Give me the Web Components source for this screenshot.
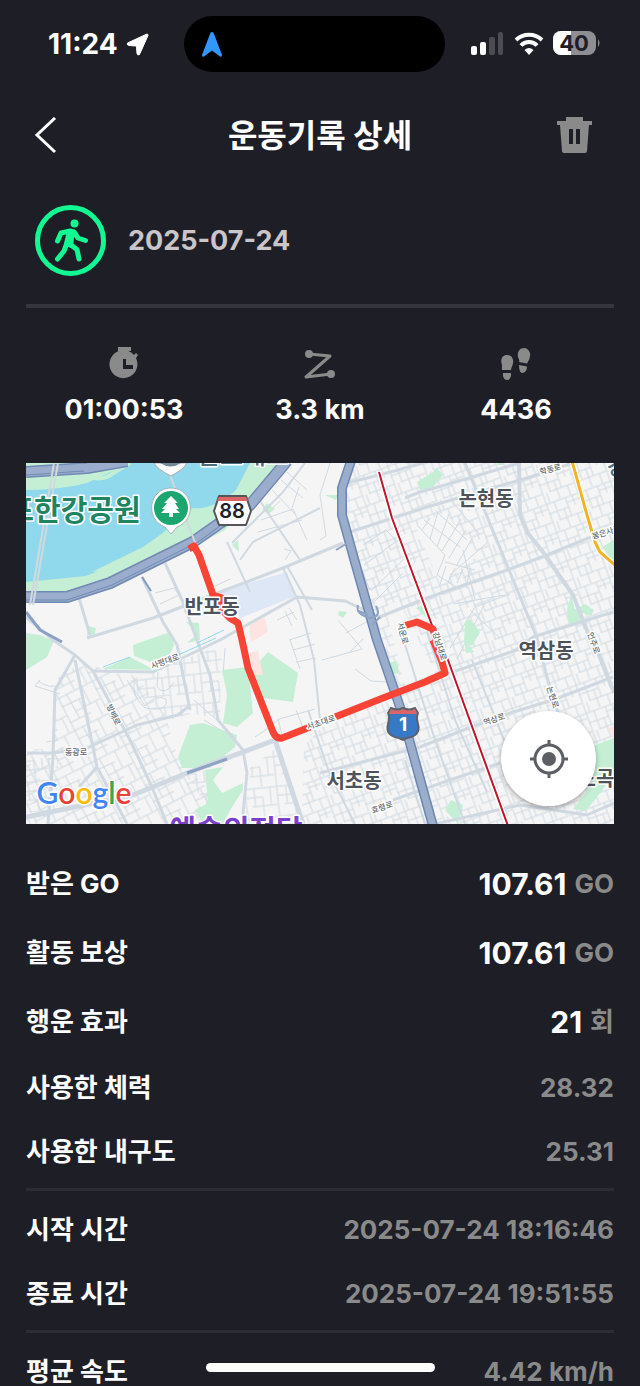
<!DOCTYPE html>
<html lang="ko">
<head>
<meta charset="utf-8">
<meta name="viewport" content="width=device-width, initial-scale=1">
<title>운동기록 상세</title>
<style>
    body {
        margin: 0;
        background: #1e1e26;
        color: #fff;
        font-family: Inter, "Noto Sans CJK KR", sans-serif;
        font-weight: 700;
    }
</style>
</head>
<body>
<workout-page></workout-page>

<script>
const define = (name, html, setup) => {
    const template = document.createElement('template');
    template.innerHTML = html;

    window.customElements.define(name, class extends HTMLElement {
        constructor() {
            super();
            this.attachShadow({ mode: 'open' });
            this.shadowRoot.appendChild(template.content.cloneNode(true));
            if (setup) setup(this.shadowRoot, this);
        }
    });
};

define('status-bar', `
    <style>
        :host {
            display: grid;
            grid-template-columns: 1fr 261px 1fr;
            align-items: center;
            padding: 16px 39px 0 28px;
        }
        .side {
            display: flex;
            align-items: center;
            gap: 8px;
            font-size: 28px;
            line-height: 32px;
        }
        .left { padding-left: 20px; }
        .right { gap: 9px; justify-content: flex-end; }
        .island {
            display: flex;
            align-items: center;
            height: 56px;
            border-radius: 28px;
            background: #000;
            padding-left: 18px;
            box-sizing: border-box;
        }
        svg { display: block; }
    </style>
    <div class="side left">
        <span>11:24</span>
        <svg width="23" height="23" viewBox="0 0 23 23"><path d="M21 1 1.500 10Q.5 12 3 12.500L10 13Q10.500 13 10.500 14L11 20.500Q11.500 23 13.500 21.500L22 2.500Q22 1 21 1Z" fill="#fff" stroke="#fff"/></svg>
    </div>
    <div class="island">
        <svg width="20" height="25" viewBox="0 0 20 25"><path d="M10 0Q11.500 0 12 2L20 23Q20 25.500 18 24.500L10 18.500 2 24.500Q0 25.500 0 23L8 2Q8.500 0 10 0Z" fill="#3296ff"/></svg>
    </div>
    <div class="side right">
        <svg width="34" height="26" viewBox="0 0 34 26">
            <rect x="0" y="15" width="6" height="9" rx="2" fill="#fff"/>
            <rect x="9" y="11" width="6" height="13" rx="2" fill="#fff"/>
            <rect x="18" y="6" width="6" height="18" rx="2" fill="#4c4c52"/>
            <rect x="27" y="1" width="5" height="23" rx="2" fill="#4c4c52"/>
        </svg>
        <svg width="30" height="25" viewBox="0 0 30 25" fill="none" stroke="#fff" stroke-width="4">
            <path d="M2 8A19 19 0 0 1 28 8"/><path d="M7 13.500A11 11 0 0 1 23 13.500"/>
            <path d="M15 23 10.500 18Q15 14 19.500 18Z" fill="#fff" stroke="none"/>
        </svg>
        <svg width="48" height="27" viewBox="0 0 48 27">
            <clipPath id="cell"><rect width="43" height="24" y="0" rx="8"/></clipPath>
            <g clip-path="url(#cell)"><rect width="43" height="27" fill="#8e8e93"/><rect width="18" height="27" fill="#fff"/></g>
            <path d="M45 8Q48 12 45 16Z" fill="#8e8e93"/>
            <text x="21" y="20" font-size="22" text-anchor="middle" fill="#1e1e26">40</text>
        </svg>
    </div>
`);

define('title-bar', `
    <style>
        :host {
            display: grid;
            grid-template-columns: 1fr auto 1fr;
            align-items: center;
            padding: 41px 48px 0 34px;
        }
        h1 { margin: 0 0 0 14px; font-size: 32px; line-height: 46px; }
        button { display: flex; border: 0; padding: 0; background: none; cursor: pointer; }
        .back { justify-self: start; }
        .remove { justify-self: end; }
    </style>
    <button class="back" aria-label="뒤로">
        <svg width="25" height="38" viewBox="0 0 25 38" fill="none" stroke="#fff" stroke-width="3"><path d="M21 1 3 18 21 35"/></svg>
    </button>
    <h1><slot></slot></h1>
    <button class="remove" aria-label="삭제">
        <svg width="35" height="38" viewBox="0 0 35 38"><path fill="#8a8a8a" fill-rule="evenodd" d="M9 0H26V4H35V8H32L30 34Q30 36 28 36H8Q5 36 5 34L3 8H0V4H9ZM12 12V27H16V12ZM19 12V27H23V12Z"/></svg>
    </button>
`);

define('workout-date', `
    <style>
        :host {
            display: flex;
            align-items: center;
            gap: 22px;
            margin: 46px 26px 0;
            padding: 0 9px 28px;
            border-bottom: 4px solid #35353e;
            color: #cac5c8;
            font-size: 27px;
            line-height: 34px;
        }
        svg { display: block; }
    </style>
    <svg width="71" height="71" viewBox="0 0 71 71" fill="none" stroke="#12f993" stroke-linecap="round" stroke-linejoin="round">
        <circle cx="35.500" cy="35.500" r="33" stroke-width="5"/>
        <circle cx="39.500" cy="18.500" r="4" fill="#12f993" stroke="none"/>
        <path stroke-width="5" d="M22.500 36 26 28 35 26 39 27 43 33 50.500 35.500M36 40 42 44.500 44 54M22.500 54 29 46 32 38"/>
        <path stroke-width="4" fill="#12f993" d="M34 26 38 27 37 33 36 41 31 39Z"/>
    </svg>
    <time><slot></slot></time>
`);

const statIcons = {
    time: '<path fill="#8a8a8a" d="M12 0H25V4H12Z"/><path fill="#8a8a8a" fill-rule="evenodd" d="M28 8 30 6 32 8 30 11A14 14 0 1 1 28 8ZM17 12V22H27V18H20V12Z"/>',
    distance: '<path d="M7 7 28 9 4 30 29 27" fill="none" stroke="#8a8a8a" stroke-width="3" stroke-linejoin="round"/><circle cx="7" cy="7" r="4" fill="#8a8a8a"/><circle cx="29" cy="27" r="4" fill="#8a8a8a"/>',
    steps: '<g fill="#8a8a8a"><path d="M9 8C4 8 2 13 4 18L4 23H13C13 20 16 17 15 13Q14 8 9 8ZM5 26H13V29Q12 33 9 33Q6 33 5 29ZM26 1C21 1 19 6 20 10Q22 14 21 15L29 16.500Q33 11 32 6Q30 1 26 1ZM21 18 29 19.500Q29 26 24 26Q21 25 21 18Z"/></g>'
};

define('stat-item', `
    <style>
        :host {
            flex: 1;
            display: flex;
            flex-direction: column;
            align-items: center;
            gap: 10px;
            font-size: 27px;
            line-height: 34px;
        }
    </style>
    <svg width="36" height="36" viewBox="0 0 36 36"></svg>
    <span><slot></slot></span>
`, (root, host) => {
    root.querySelector('svg').innerHTML = statIcons[host.getAttribute('icon')];
});

define('route-map', `
    <style>
        :host { display: block; position: relative; margin: 0 26px; }
        svg { display: block; width: 100%; }
        button {
            position: absolute;
            right: 18px;
            bottom: 18px;
            display: flex;
            align-items: center;
            justify-content: center;
            width: 95px;
            height: 95px;
            border: 0;
            border-radius: 50%;
            background: #fff;
            box-shadow: 0 2px 5px #0005;
            cursor: pointer;
        }
        button svg { width: 38px; height: 38px; }
        text { paint-order: stroke; stroke: #fff; stroke-width: 3px; stroke-linejoin: round; text-anchor: middle; }
        .minor path { fill: none; stroke: #d0dae2; stroke-width: 1; }
        .roads { fill: none; stroke: #d0d9e1; stroke-width: 3; stroke-linejoin: round; }
        .park { fill: #c4efd4; }
        .district { font-size: 20px; fill: #4c535b; font-weight: 600; stroke-width: 4px; }
        .street { font-size: 8px; fill: #666b70; font-weight: 500; }
        .route { fill: none; stroke: #f84335; stroke-width: 7; stroke-linejoin: round; }
    </style>
    <svg viewBox="26 463 588 361" role="img" aria-label="운동 경로 지도">
        <defs>
            <pattern id="fine" width="34" height="30" patternUnits="userSpaceOnUse" patternTransform="rotate(-20)">
                <path d="M0 1H34M0 11H21M8 20H34M1 0V30M9 1V20M16 11V30M21 1V20M28 1V11M27 20V30M5 20V30M21 6H34" fill="none" stroke="#cfd9e1"/>
            </pattern>
            <pattern id="west" width="38" height="36" patternUnits="userSpaceOnUse" patternTransform="rotate(-27)">
                <path d="M0 1H38M0 10 22 11M10 20H38M0 28H24M1 0V36M10 1 11 28M19 10V36M27 1V20M33 20V36" fill="none" stroke="#cfd9e1"/>
            </pattern>
            <pattern id="flat" width="32" height="30" patternUnits="userSpaceOnUse" patternTransform="rotate(-6)">
                <path d="M0 1H32M0 10H18M7 19H32M1 0V30M10 1V19M18 10V30M26 1V19" fill="none" stroke="#cfd9e1"/>
            </pattern>
        </defs>
        <path fill="#f5f5f5" d="M26 463H614V824H26Z"/>

        <path fill="url(#fine)" d="M352 463H614V824H435L415 748 386 650 350 545 345 500ZM304 745 330 720 395 700 430 824H302Z"/>
        <path fill="url(#west)" d="M55 680 80 663 136 676 165 715 180 765 222 800 205 824H26V750L52 748Z"/>
        <path fill="url(#flat)" d="M130 680 222 645 220 718 190 714 170 720 145 704ZM250 768 280 745 302 824H242ZM26 758H58V812H26ZM205 770 186 775 207 806 218 780Z"/>
        <path fill="#f5f5f5" d="M385 607 400 603 435 673 405 685ZM415 526 445 512 479 555 440 584Z"/>
        <g class="minor">
            <path d="M417 525 445 555 437 575 458 588M424 520 460 547M435 510 467 540M451 500 480 535M445 562 475 570M450 575 488 542M463 550 475 600M453 604 505 595M450 648 475 607 510 594M457 659 485 603M470 610 500 638M363 545 386 530 410 555M364 565 398 540M371 591 408 555M373 603 403 573M430 518 422 530M438 512 430 539M449 514 437 547M461 519 442 551M466 530 449 558M472 539 456 566M446 566 440 584M455 568 448 582M463 569 457 583M470 569 466 588"/>
            <path d="M40 680 35 686 60 694M38 681Q50 690 61 684M46 742 58 740M127 680 138 695 145 706Q156 694 166 699 169 712 145 708 130 695 135 678M158 672 157 687Q165 697 174 682M194 700 218 721M204 720 232 737M255 737 267 729 279 719 315 709M278 719 282 735M296 710 304 730M225 648 223 675"/>
            <path d="M330 463 320 495 326 536 320 540M350 543 370 590M338 620 362 649 322 660M346 633 374 618M350 652 363 639M355 669 371 681 388 682"/>
            <path d="M287 472 307 490M281 480 303 498M272 490 296 515M268 512 280 501M261 520 293 509M258 532 302 520M293 509 307 540M299 487 292 508M155 593 174 588M160 604 179 595M166 614 186 606M174 588 186 605M285 611 292 626M289 608 297 620M277 620 294 612M213 587 230 579M285 560 291 551 284 549M289 640 311 633M293 650 315 644M296 662 316 658M300 669 290 640"/>
        </g>

        <g class="park">
            <path d="M222 670 248 667 253 713 237 727 223 723 227 695ZM190 725 203 723 237 735 235 747 210 768 182 768 178 757ZM250 672 268 652 298 673 293 702 263 698ZM205 770 223 767 213 780 222 793 243 783 243 790 232 807 223 824H203L195 810 208 803Z"/>
            <path d="M26 633 40 635 54 641 47 657 26 670ZM133 645 170 632 174 645 170 654 150 662 134 656ZM103 669 130 657 155 670ZM186 622 199 623 200 640 187 643 195 636 190 626ZM88 626 96 628 95 634 87 636Z"/>
            <path d="M417 482 433 472 437 468 443 475 433 487 420 490ZM262 510 267 503 275 509 268 514ZM232 545 238 540 239 552ZM416 608 424 605 426 617ZM567 610 571 595 575 610 585 604 594 610 591 616 580 612 581 622 569 625ZM602 547 614 540V562ZM465 622 470 619 480 632 472 646 464 642ZM445 810 451 800 463 805 458 824ZM583 750 614 738V775L586 811 573 809 592 785ZM497 463H504V465H497ZM325 495H338L336 500ZM339 611 347 612 343 618 338 615ZM388 663 397 661 399 673 391 675ZM464 640 474 652 466 653Z"/>
        </g>
        <path fill="#dee7f6" d="M217 592 287 572 296 596 240 618Z"/>
        <path fill="#fde3e1" d="M249 622 265 618 268 632 251 642ZM250 653 258 651 263 675 254 675ZM608 728 614 726V738Z"/>

        <path fill="#c4efd4" d="M26 463H288L225 530 110 590 26 600Z"/>
        <path fill="#90d9ed" d="M26 490Q60 490 87 483L130 463H250L236 490Q214 510 193 508L160 535Q125 562 86 576L26 582Z"/>
        <path fill="#c4efd4" d="M92 572 100 568 143 547 130 562 112 572 100 571Z"/>
        <path fill="none" stroke="#c4efd4" stroke-width="4" d="M85 474Q100 484 115 472L130 463"/>

        <g class="roads">
            <path d="M26 617 53 640 75 655 93 671 153 672 220 640 297 597 345 601 382 618"/>
            <path d="M87 638 153 618 220 592 283 568 343 543M79 598 90 635M142 577 163 622 177 645 190 710M165 563 182 600 210 675 218 720 243 750 247 773 242 824"/>
            <path d="M227 542 250 592M232 543 283 492 305 463M240 560 253 542 320 508M260 501 300 560M283 568 300 605 314 660 320 720M287 566 295 580 312 610" stroke-width="2"/>
            <path d="M377 618 427 598 507 570 547 555 613 528M350 532 427 507 527 478 573 463M347 483 387 473 423 463M405 498 420 492 445 485 520 463"/>
            <path d="M519 463 520 515 527 532 543 552 573 595 590 638 597 650 614 693" stroke-width="4"/>
            <path d="M465 463 507 565 537 638 553 700 563 724M450 673 517 650 533 637 613 612"/>
            <path d="M320 773 420 747 497 717 553 700 613 677M393 800 450 780 500 763M435 824 520 805 587 815 614 803"/>
            <path d="M75 655 55 690 53 757 48 824M93 671 130 740 152 787 167 824M75 660 97 767 127 824M27 753 53 753 87 748 137 725 178 715 189 706M97 767 79 787"/>
            <path d="M275 740 187 773 133 795 26 817M275 740 303 824" stroke-width="5"/>
            <path d="M427 632 455 720 487 792M402 635 435 740 465 824M472 660 510 755M405 760 425 824M308 710 330 775 355 824" stroke-width="2"/>
        </g>
        <path d="M187 773 227 759" stroke="#8fa3c5" stroke-width="3"/>
        <path d="M142 577 151 591" stroke="#829bc1" stroke-width="2"/>
        <path d="M103 667 130 657M178 655 216 638M197 643 224 630" stroke="#90d9ed" stroke-width="1"/>

        <g fill="none" stroke-linejoin="round">
            <path d="M26 472 87 468 127 461M26 597H67L110 583 193 542 220 523 250 505 287 461" stroke="#7189b4" stroke-width="12"/>
            <path d="M26 472 87 468 127 461M26 597H67L110 583 193 542 220 523 250 505 287 461" stroke="#9aadcc" stroke-width="9"/>
            <path d="M26 600H67L112 585 198 542 224 523M26 475 84 471" stroke="#7189b4"/>
            <path d="M26 612 40 630 62 642" stroke="#8ba1c3" stroke-width="3"/>
            <path d="M58 463 33 605M54 463 30 605M170 475 197 548" stroke="#d1d8de" stroke-width="2"/>
            <path d="M351 461 342 488V515L353 555 377 640 400 707 433 826" stroke="#6c86b2" stroke-width="10"/>
            <path d="M351 461 342 488V515L353 555 377 640 400 707 433 826" stroke="#9aaecb" stroke-width="7"/>
            <path d="M336 550 346 544M359 611 368 615M380 617 372 625M358 605Q355 614 370 618Q382 617 376 606" stroke="#8da3c5" stroke-width="2"/>
            <path d="M379 472 392 518 433 628 448 660 508 826" stroke="#fff" stroke-width="5"/>
            <path d="M379 472 392 518 433 628 448 660 508 826" stroke="#be1528" stroke-width="2"/>
            <path d="M572 461 587 515 595 542 600 552 616 566" stroke="#fff" stroke-width="5"/>
            <path d="M572 461 587 515 595 542 600 552 616 566" stroke="#f1b429" stroke-width="3"/>
        </g>

        <g class="route">
            <path d="M189 549 194 546 199 555 213 595 222 598 221 609 230 618 238 623 242 640 248 668 273 732Q276 739 282 738L310 727M335 717 383 698 425 682 445 673 442 662 433 640M436 640 433 629 417 622 400 627"/>
        </g>

        <g class="district">
            <text x="486" y="506">논현동</text>
            <text x="212" y="614">반포동</text>
            <text x="546" y="658">역삼동</text>
            <text x="354" y="788">서초동</text>
            <text x="596" y="786">도곡</text>
        </g>
        <g class="street">
            <text transform="translate(400 634) rotate(75)">서운로</text>
            <text transform="translate(437 647) rotate(72)">강남대로</text>
            <text transform="translate(322 725) rotate(-19)">서초대로</text>
            <text transform="translate(166 664) rotate(-20)">사평대로</text>
            <text transform="translate(111 716) rotate(64)">방배로</text>
            <text x="76" y="755">동광로</text>
            <text transform="translate(551 472) rotate(-14)">학동로</text>
            <text transform="translate(607 535) rotate(-17)">봉은사로</text>
            <text transform="translate(591 644) rotate(70)">언주로</text>
            <text transform="translate(550 698) rotate(72)">논현로</text>
            <text transform="translate(495 722) rotate(-18)">역삼로</text>
            <text transform="translate(383 810) rotate(-19)">효령로</text>
        </g>
        <g font-size="29" font-weight="500">
            <text x="74" y="521" font-weight="600" fill="#1f8460">포한강공원</text>
            <text x="236" y="841" font-weight="600" fill="#7b3fd0">예술의전당</text>
            <text x="243" y="464" font-size="25" fill="#4b6d7c">반포대교</text>
            <text x="617" y="474" font-size="22" fill="#477284">강</text>
        </g>
        <path d="M154 463Q157 469 171 476 184 469 187 463Z" fill="#fff" stroke="#aaa"/>
        <path d="M160 463Q171 470 181 463Z" fill="#728b98"/>
        <path d="M171 534 165 527C144 519 149 488 171 488S198 519 177 527Z" fill="#fff" stroke="#a8b4b2"/>
        <circle cx="171" cy="508" r="17" fill="#1aa66e"/>
        <path d="M171 496 164 503H167L162 509H165L161 513H169V517H173V513H180L176 509H179L175 503H178Z" fill="#fff"/>
        <path d="M219 496H246L251 511 246 525H219L214 511Z" fill="#fff" stroke="#55565a" stroke-width="2" stroke-linejoin="round"/>
        <path d="M219 497H246L248 501H217Z" fill="#df6468"/>
        <text x="232" y="518" font-size="20" font-weight="600" fill="#202124" style="stroke:none">88</text>
        <path d="M391 708Q397 711 403 708 409 711 415 708L418 713Q416 718 418 724 421 736 407 738L403 740 399 738Q385 736 388 724 390 718 388 713Z" fill="#3778c7" stroke="#5e6166" stroke-width="2"/>
        <path d="M391 709Q397 712 403 709 409 712 415 709L417 714H389Z" fill="#df6468"/>
        <text x="403" y="731" font-size="19" fill="#fff" style="stroke:none">1</text>
        <text x="84" y="804" font-family="Lato" font-size="30" font-weight="600"><tspan fill="#4285f4">G</tspan><tspan fill="#ea4335">o</tspan><tspan fill="#fbbc05">o</tspan><tspan fill="#4285f4">g</tspan><tspan fill="#34a853">l</tspan><tspan fill="#ea4335">e</tspan></text>
    </svg>
    <button aria-label="현재 위치">
        <svg viewBox="0 0 38 38" fill="none" stroke="#5c6064" stroke-width="3"><circle cx="19" cy="19" r="14"/><circle cx="19" cy="19" r="7" fill="#5c6064" stroke="none"/><path d="M19 0V6M19 32V38M0 19H6M32 19H38"/></svg>
    </button>
`);

define('detail-row', `
    <style>
        :host {
            display: flex;
            align-items: center;
            justify-content: space-between;
            height: var(--row-height, 64px);
            font-size: 26px;
            line-height: 32px;
        }
        .value { display: flex; align-items: center; gap: 8px; color: #8a8a8a; }
        ::slotted(b) { color: #fff; font-size: 30px; font-weight: 700; }
    </style>
    <span class="label"></span>
    <span class="value"><slot></slot></span>
`, (root, host) => {
    root.querySelector('.label').textContent = host.getAttribute('label');
});

define('detail-group', `
    <style>
        :host { display: block; margin: 0 26px; }
        :host([divided]) { border-top: 3px solid #2c2c35; padding-top: 7px; margin-top: 4px; }
    </style>
    <slot></slot>
`);

define('workout-page', `
    <style>
        :host { display: block; position: relative; height: 100vh; overflow: hidden; }
        .stats { display: flex; margin: 39px 26px 0; padding-bottom: 36px; }
        .rewards { --row-height: 69px; margin-top: 25px; }
        .home {
            position: absolute;
            left: 50%;
            bottom: 14px;
            width: 229px;
            height: 9px;
            margin-left: -114px;
            border-radius: 5px;
            background: #fff;
        }
    </style>
    <status-bar></status-bar>
    <title-bar>운동기록 상세</title-bar>
    <workout-date>2025-07-24</workout-date>
    <div class="stats">
        <stat-item icon="time">01:00:53</stat-item>
        <stat-item icon="distance">3.3 km</stat-item>
        <stat-item icon="steps">4436</stat-item>
    </div>
    <route-map></route-map>
    <detail-group class="rewards">
        <detail-row label="받은 GO"><b>107.61</b><span>GO</span></detail-row>
        <detail-row label="활동 보상"><b>107.61</b><span>GO</span></detail-row>
        <detail-row label="행운 효과"><b>21</b><span>회</span></detail-row>
    </detail-group>
    <detail-group>
        <detail-row label="사용한 체력">28.32</detail-row>
        <detail-row label="사용한 내구도">25.31</detail-row>
    </detail-group>
    <detail-group divided>
        <detail-row label="시작 시간">2025-07-24 18:16:46</detail-row>
        <detail-row label="종료 시간">2025-07-24 19:51:55</detail-row>
    </detail-group>
    <detail-group divided>
        <detail-row label="평균 속도">4.42 km/h</detail-row>
    </detail-group>
    <div class="home"></div>
`);
</script>
</body>
</html>
